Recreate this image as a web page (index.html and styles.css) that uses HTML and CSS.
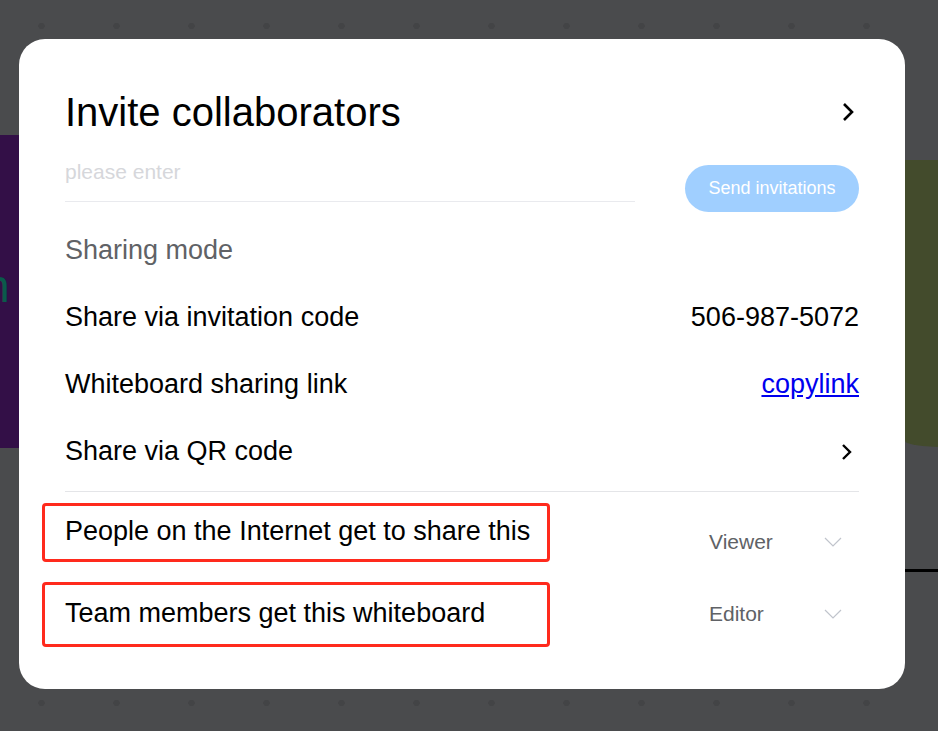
FILE: index.html
```html
<!DOCTYPE html>
<html lang="en">
<head>
<meta charset="utf-8">
<title>Invite collaborators</title>
<link rel="stylesheet" href="styles.css">
</head>
<body>
<div class="board">
  <div class="dots dots-top"></div>
  <div class="dots dots-bottom"></div>
  <div class="shape purple"><span class="shape-letter">h</span></div>
  <div class="shape green"></div>
  <div class="shape line"></div>

  <div class="modal">
    <div class="title-row">
      <h1 class="title">Invite collaborators</h1>
      <svg class="chev-right" width="14" height="20" viewBox="0 0 14 20"><polyline points="3,2 11,10 3,18" fill="none" stroke="#000" stroke-width="2.6"/></svg>
    </div>

    <div class="invite-row">
      <div class="field"><span class="placeholder">please enter</span></div>
      <button class="send-btn">Send invitations</button>
    </div>

    <div class="section-label">Sharing mode</div>

    <div class="row">
      <span class="row-label">Share via invitation code</span>
      <span class="row-value">506-987-5072</span>
    </div>
    <div class="row">
      <span class="row-label">Whiteboard sharing link</span>
      <a class="row-link" href="#">copylink</a>
    </div>
    <div class="row">
      <span class="row-label">Share via QR code</span>
      <svg class="chev-right small" width="14" height="20" viewBox="0 0 14 20"><polyline points="3,3 10,10 3,17" fill="none" stroke="#000" stroke-width="2.4"/></svg>
    </div>

    <div class="divider"></div>

    <div class="perm-row perm-first">
      <span class="perm-label">People on the Internet get to share this</span>
      <div class="select select-first">
        <span class="select-text">Viewer</span>
        <svg class="chev-down" width="18" height="10" viewBox="0 0 18 10"><polyline points="1,1 9,9 17,1" fill="none" stroke="#c0c4cc" stroke-width="1.2"/></svg>
      </div>
      <div class="annot annot-first"></div>
    </div>
    <div class="perm-row perm-second">
      <span class="perm-label">Team members get this whiteboard</span>
      <div class="select">
        <span class="select-text">Editor</span>
        <svg class="chev-down" width="18" height="10" viewBox="0 0 18 10"><polyline points="1,1 9,9 17,1" fill="none" stroke="#c0c4cc" stroke-width="1.2"/></svg>
      </div>
      <div class="annot annot-second"></div>
    </div>
  </div>
</div>
</body>
</html>
```

FILE: styles.css
```css
* { box-sizing: border-box; }

html, body {
  margin: 0;
  padding: 0;
}

body {
  width: 938px;
  height: 731px;
  overflow: hidden;
  background: #4a4b4d;
  font-family: "Liberation Sans", Arial, Helvetica, sans-serif;
}

.board {
  position: relative;
  width: 938px;
  height: 731px;
  padding: 39px 33px 42px 19px;
}

.dots {
  position: absolute;
  left: 4px;
  width: 934px;
  height: 8px;
  background-image: radial-gradient(circle, #434446 3px, transparent 3.5px);
  background-size: 75px 8px;
  background-repeat: repeat-x;
}
.dots-top { top: 22px; }
.dots-bottom { top: 699px; }

.shape { position: absolute; }
.purple {
  left: 0;
  top: 135px;
  width: 19px;
  height: 313px;
  background: #330f47;
  overflow: hidden;
}
.shape-letter {
  position: absolute;
  left: -16px;
  top: 128px;
  font-size: 46px;
  color: #0b5a4b;
  line-height: 1;
}
.green {
  left: 905px;
  top: 160px;
  width: 40px;
  height: 287px;
  background: #434b2c;
  border-bottom-left-radius: 40px 6px;
}
.line {
  left: 905px;
  top: 569px;
  width: 40px;
  height: 3px;
  background: #000;
}

.modal {
  position: relative;
  z-index: 1;
  width: 886px;
  height: 650px;
  background: #fff;
  border-radius: 26px;
  padding: 41px 46px 0 46px;
}

.title-row {
  display: flex;
  align-items: center;
  justify-content: space-between;
  height: 64px;
}
.title {
  margin: 0;
  font-weight: normal;
  font-size: 40px;
  line-height: 46px;
  color: #000;
}
.chev-right { display: block; margin-right: 4px; }
.chev-right.small { margin-right: 5px; }

.invite-row {
  display: flex;
  justify-content: space-between;
  align-items: flex-start;
  height: 73px;
  padding-top: 5px;
}
.field {
  width: 570px;
  height: 53px;
  border-bottom: 1px solid #e9eaee;
  display: flex;
  align-items: center;
  padding-bottom: 6px;
}
.placeholder {
  font-size: 21px;
  color: #d6d7db;
}
.send-btn {
  margin-top: 16px;
  width: 174px;
  height: 47px;
  border: none;
  border-radius: 24px;
  background: #a0cfff;
  color: #fff;
  font-family: inherit;
  font-size: 18px;
  padding: 0;
}

.section-label {
  height: 67px;
  display: flex;
  align-items: center;
  font-size: 27px;
  color: #606266;
}

.row {
  height: 67px;
  display: flex;
  align-items: center;
  justify-content: space-between;
  font-size: 27px;
  color: #000;
}
.row-link {
  color: #0000ee;
  text-decoration: underline;
  text-underline-offset: 2px;
}

.divider {
  margin-top: 6px;
  height: 1px;
  background: #e4e5e8;
}

.perm-row {
  position: relative;
  display: flex;
  justify-content: space-between;
  align-items: flex-start;
}
.perm-first { height: 82px; padding-top: 21px; }
.perm-second { height: 80px; padding-top: 21px; }

.perm-label {
  font-size: 27px;
  line-height: 36px;
  color: #000;
}
.select {
  width: 150px;
  display: flex;
  align-items: center;
  justify-content: space-between;
  height: 36px;
  padding-right: 17px;
  margin-top: 1px;
}
.select-first { margin-top: 11px; }
.select-text {
  font-size: 21px;
  color: #606266;
}
.chev-down { display: block; }

.annot {
  position: absolute;
  left: -23px;
  width: 508px;
  border: 3px solid #ff2a1d;
  border-radius: 4px;
  pointer-events: none;
}
.annot-first { top: 11px; height: 59px; }
.annot-second { top: 8px; height: 65px; }
```
